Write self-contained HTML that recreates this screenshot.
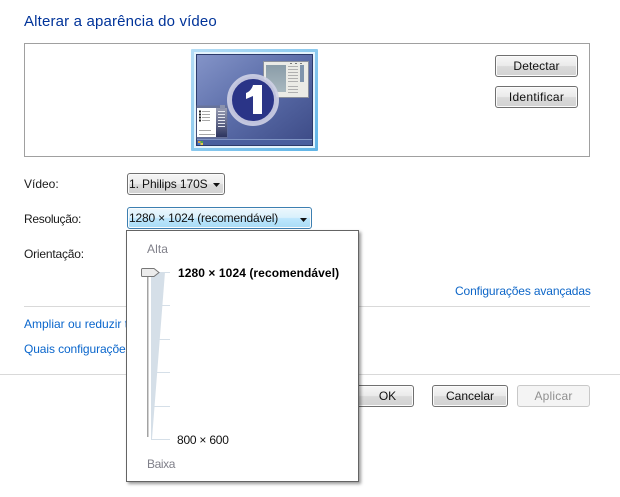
<!DOCTYPE html>
<html lang="pt"><head><meta charset="utf-8"><style>
html,body{margin:0;padding:0;background:#fff}
body{width:620px;height:497px;position:relative;overflow:hidden;font:12px/16px "Liberation Sans",sans-serif;color:#1a1a1a}
.a{position:absolute;white-space:nowrap}
.l{color:#0a66cc}
.b{position:absolute;box-sizing:border-box;height:22px;border:1px solid #707070;border-radius:3px;background:linear-gradient(#f6f6f6 0,#ebebeb 48%,#dadada 52%,#d2d2d2 100%);box-shadow:inset 0 0 0 1px #fbfbfb;text-align:center;line-height:20px;color:#111}
.t{position:absolute;left:151px;width:19px;height:1px;background:#d5dfe8}
</style></head><body>
<div class="a" style="left:24px;top:13px;font-size:15px;line-height:18px;color:#003399;letter-spacing:.16px">Alterar a aparência do vídeo</div>
<div class="a" style="left:24px;top:43px;width:566px;height:114px;box-sizing:border-box;border:1px solid #a0a0a0"></div>
<svg class="a" style="left:191px;top:49px" width="127" height="102" viewBox="0 0 127 102">
<defs><linearGradient id="bg" x1="0" y1="0" x2="1" y2="1"><stop offset="0" stop-color="#8494c8"/><stop offset=".5" stop-color="#5a6ca8"/><stop offset="1" stop-color="#3c4a86"/></linearGradient>
<linearGradient id="fr" x1="0" y1="0" x2="1" y2="1"><stop offset="0" stop-color="#b6def6"/><stop offset="1" stop-color="#5fb4e6"/></linearGradient>
<linearGradient id="sc" x1="0" y1="0" x2="0" y2="1"><stop offset="0" stop-color="#8a9ca8"/><stop offset="1" stop-color="#a8b8bf"/></linearGradient>
<linearGradient id="dk" x1="0" y1="0" x2="0" y2="1"><stop offset="0" stop-color="#9a9eb4"/><stop offset="1" stop-color="#2d3560"/></linearGradient></defs>
<rect x="0" y="0" width="127" height="102" rx="1" fill="url(#fr)"/>
<rect x="3" y="3" width="121" height="96" fill="#e4f3fc"/>
<rect x="5.500" y="5.500" width="116" height="91" fill="url(#bg)" stroke="#2c3a6a" stroke-width="1"/>
<rect x="6" y="91" width="115" height="5" fill="#4a5f9e"/>
<rect x="6" y="90" width="115" height="1" fill="#7f94c4"/>
<rect x="7" y="92" width="2.500" height="2" fill="#d9a03a"/><rect x="9.500" y="92" width="2.500" height="2" fill="#4ea24a"/><rect x="7" y="94" width="2.500" height="2" fill="#3f7ad0"/><rect x="9.500" y="94" width="2.500" height="2" fill="#e8c84a"/>
<rect x="72.500" y="12.500" width="45" height="36" fill="#ebebe6" stroke="#8a8f9c"/>
<rect x="75" y="16" width="20" height="27" fill="url(#sc)"/>
<rect x="109" y="16" width="4" height="17" fill="#7f94ac"/>
<path d="M97 17.500h10M97 20.500h10M97 23.500h10M97 26.500h10M97 29.500h10M97 32.500h10M97 37.500h10M97 40.500h10M97 43.500h10" stroke="#b0b0b0"/>
<path d="M99 14.500h2M104 14.500h2M109 14.500h2" stroke="#777"/>
<rect x="5.500" y="56.500" width="31" height="33" fill="#6a7290" opacity=".7"/>
<rect x="6" y="59" width="19" height="29" fill="#fff"/>
<rect x="25" y="59" width="11" height="29" fill="url(#dk)"/>
<path d="M27 62.500h7M27 65.500h7M27 68.500h7M27 71.500h7M27 74.500h7M27 77.500h7" stroke="#e4e6ee"/>
<rect x="29" y="56" width="5" height="4" fill="#8b93ad"/>
<path d="M11 62.500h8M11 65.500h8M11 68.500h8M11 71.500h8M8 81.500h12M8 85.500h16" stroke="#a8a8a8"/>
<path d="M8 62.500h2M8 65.500h2M8 68.500h2M8 71.500h2" stroke="#222" stroke-width="2"/>
<circle cx="62" cy="51" r="23.500" fill="#2a3487" stroke="#cfd2e6" stroke-width="5" stroke-opacity=".9"/>
<path d="M62 36h9v29h-9V47l-7 3v-6c3-1 6-4 7-8z" fill="#fff"/>
</svg>
<div class="b" style="left:495px;top:55px;width:83px;letter-spacing:.1px">Detectar</div>
<div class="b" style="left:495px;top:86px;width:83px;letter-spacing:.3px">Identificar</div>

<div class="a" style="left:24px;top:176px">Vídeo:</div>
<div class="b" style="left:127px;top:173px;width:98px;text-align:left;padding-left:1px;letter-spacing:-.1px">1. Philips 170S</div>
<svg class="a" style="left:213px;top:183px" width="8" height="5"><path d="M0 0h7L3.500 4z" fill="#111"/></svg>
<div class="a" style="left:24px;top:211px;letter-spacing:-.3px">Resolução:</div>
<div class="b" style="left:127px;top:207px;width:185px;text-align:left;padding-left:1px;border-color:#3c7fb1;background:linear-gradient(#ecf7fd 0,#d9f0fc 48%,#bde6fd 52%,#a9dcf6 100%);letter-spacing:-.18px">1280 × 1024 (recomendável)</div>
<svg class="a" style="left:300px;top:218px" width="8" height="5"><path d="M0 0h7L3.500 4z" fill="#111"/></svg>
<div class="a" style="left:24px;top:246px;letter-spacing:-.2px">Orientação:</div>

<div class="a l" style="left:455px;top:283px;letter-spacing:-.13px;color:#0d66c8">Configurações avançadas</div>
<div class="a" style="left:24px;top:306px;width:566px;height:1px;background:#d9d9d9"></div>
<div class="a l" style="left:24px;top:316px">Ampliar ou reduzir t</div>
<div class="a l" style="left:24px;top:341px;letter-spacing:-.1px">Quais configurações</div>
<div class="a" style="left:0;top:374px;width:620px;height:1px;background:#d9d9d9"></div>

<div class="b" style="left:340px;top:385px;width:74px;padding-left:21px">OK</div>
<div class="b" style="left:432px;top:385px;width:76px">Cancelar</div>
<div class="b" style="left:517px;top:385px;width:73px;border-color:#c8c8c8;background:#f4f4f4;box-shadow:none;color:#909090;letter-spacing:.2px">Aplicar</div>

<div class="a" style="left:126px;top:230px;width:233px;height:252px;box-sizing:border-box;background:#fff;border:1px solid #646464;box-shadow:2px 2px 3px rgba(0,0,0,.4)"></div>
<div class="a" style="left:147px;top:241px;color:#80808a;letter-spacing:.1px">Alta</div>
<svg class="a" style="left:147px;top:270px" width="26" height="172">
<path d="M4 2H18L5 169H4z" fill="#d5dfe8"/>
<rect x="0" y="6" width="1.500" height="161" fill="#a3a3a3"/>
</svg>
<div class="t" style="top:272px;left:160px;width:10px"></div>
<div class="t" style="top:305px"></div>
<div class="t" style="top:339px"></div>
<div class="t" style="top:372px"></div>
<div class="t" style="top:406px"></div>
<div class="t" style="top:439px"></div>
<svg class="a" style="left:140px;top:267px" width="22" height="12"><path d="M1.500 2.500a1 1 0 0 1 1-1H14L19 5.500l-5 4H2.500a1 1 0 0 1-1-1z" fill="#ececec" stroke="#777"/></svg>
<div class="a" style="left:178px;top:265px;font-weight:bold;color:#000;letter-spacing:.08px">1280 × 1024 (recomendável)</div>
<div class="a" style="left:177px;top:432px;color:#111;letter-spacing:-.23px">800 × 600</div>
<div class="a" style="left:147px;top:456px;color:#80808a;letter-spacing:-.4px">Baixa</div>
</body></html>
